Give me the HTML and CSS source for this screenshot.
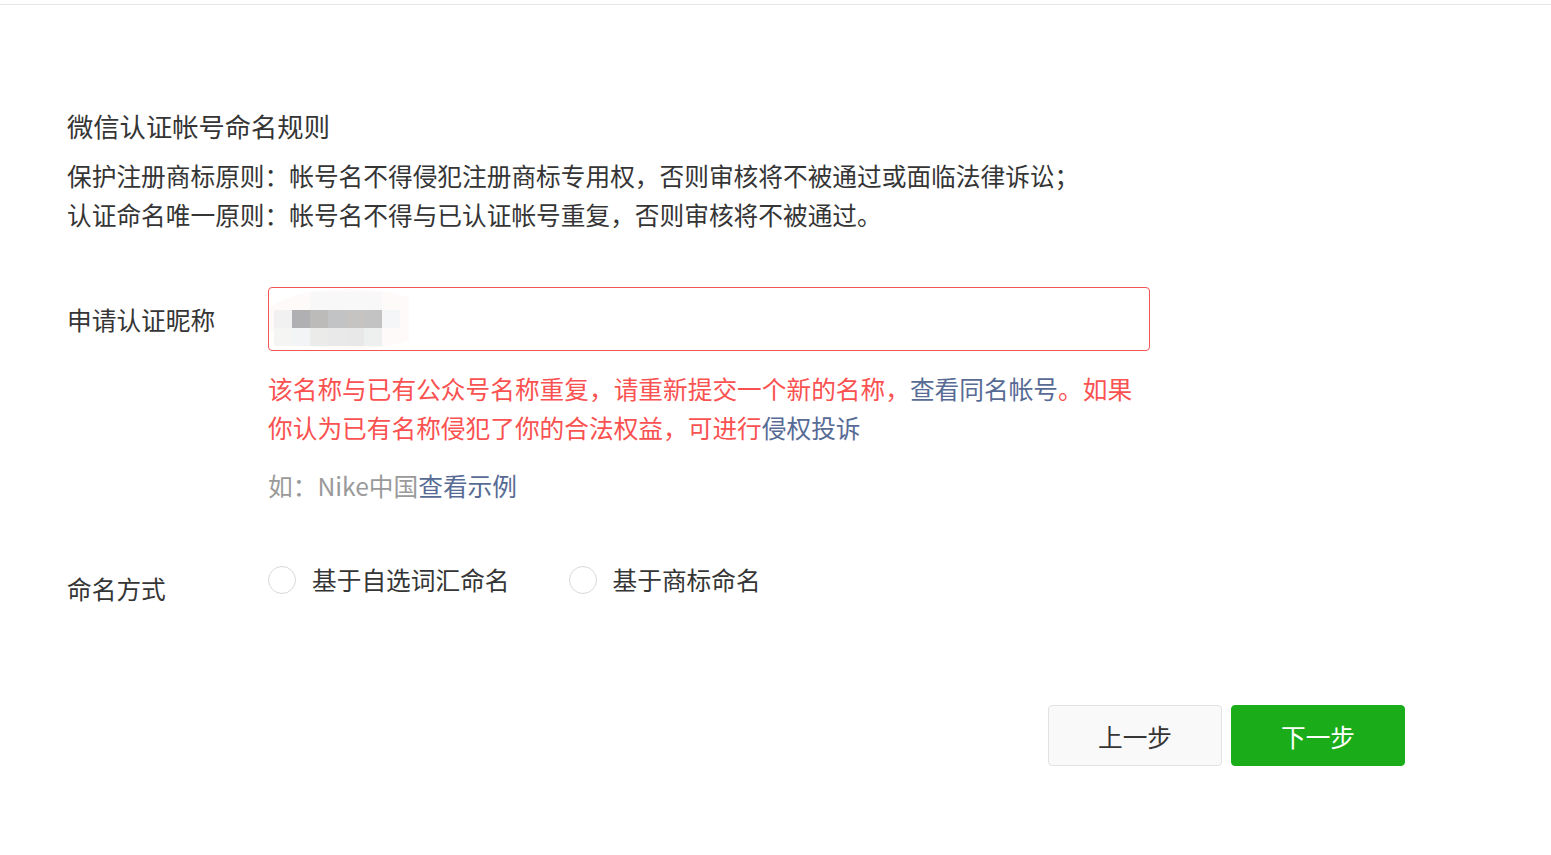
FILE: index.html
```html
<!DOCTYPE html>
<html lang="zh-CN">
<head>
    <meta charset="UTF-8">
    <title>微信认证帐号命名</title>
    <link rel="stylesheet" href="styles.css">
</head>
<body>
    <div class="topbar"></div>

    <div class="content">
        <!-- 命名规则 -->
        <h3 class="rules-title">微信认证帐号命名规则</h3>
        <p class="rule">保护注册商标原则：帐号名不得侵犯注册商标专用权，否则审核将不被通过或面临法律诉讼；</p>
        <p class="rule">认证命名唯一原则：帐号名不得与已认证帐号重复，否则审核将不被通过。</p>

        <!-- 申请认证昵称 -->
        <div class="form-row first">
            <label class="form-label tall">申请认证昵称</label>
            <div class="form-field">
                <div class="nickname-input">
                    <svg class="mosaic" width="140" height="64" viewBox="0 0 140 64">
                        <ellipse cx="80" cy="32" rx="86" ry="30" fill="#fffafa"/>
                        <rect x="41" y="5" width="72" height="18" fill="#f8f8f8"/>
                        <rect x="5" y="23" width="18" height="18" fill="#f1f1f1"/>
                        <rect x="23" y="23" width="18" height="18" fill="#b0b0b2"/>
                        <rect x="41" y="23" width="18" height="18" fill="#bdbbb9"/>
                        <rect x="59" y="23" width="18" height="18" fill="#c2c3c5"/>
                        <rect x="77" y="23" width="18" height="18" fill="#c6c3c3"/>
                        <rect x="95" y="23" width="18" height="18" fill="#c3c3c3"/>
                        <rect x="113" y="23" width="18" height="18" fill="#f5f6f8"/>
                        <rect x="5" y="41" width="18" height="18" fill="#f5f5f3"/>
                        <rect x="23" y="41" width="18" height="18" fill="#f3f4f6"/>
                        <rect x="41" y="41" width="18" height="18" fill="#ebebe9"/>
                        <rect x="59" y="41" width="18" height="18" fill="#e9e9e9"/>
                        <rect x="77" y="41" width="18" height="18" fill="#e8e8e8"/>
                        <rect x="95" y="41" width="18" height="18" fill="#eef0ef"/>
                    </svg>
                </div>
                <p class="error-tip">该名称与已有公众号名称重复，请重新提交一个新的名称，<a href="#">查看同名帐号</a>。如果你认为已有名称侵犯了你的合法权益，可进行<a href="#">侵权投诉</a></p>
                <p class="hint">如：Nike中国<a href="#">查看示例</a></p>
            </div>
        </div>

        <!-- 命名方式 -->
        <div class="form-row second">
            <label class="form-label offset">命名方式</label>
            <div class="form-field radios">
                <label class="radio"><span class="radio-circle"></span>基于自选词汇命名</label>
                <label class="radio"><span class="radio-circle"></span>基于商标命名</label>
            </div>
        </div>

        <div class="actions">
            <button class="btn btn-default">上一步</button>
            <button class="btn btn-primary">下一步</button>
        </div>
    </div>
</body>
</html>
```

FILE: styles.css
```css
body {
    margin: 0;
    background-color: #fff;
    color: #353535;
    font-family: "Noto Sans CJK SC", "Noto Sans", sans-serif;
    font-size: 24.7px;
    line-height: 39px;
}

.topbar {
    height: 4px;
    border-bottom: 1px solid #e4e6eb;
}

.content {
    padding: 0 146px 0 67px;
}

.rules-title {
    margin: 101px 0 11px;
    font-size: 26.3px;
    font-weight: normal;
    line-height: 39px;
}

.rule {
    margin: 0;
}

.form-row {
    display: flex;
    align-items: flex-start;
}

.form-row.first {
    margin-top: 53px;
}

.form-row.second {
    margin-top: 55px;
}

.form-label {
    width: 201px;
    flex-shrink: 0;
}

.form-label.tall {
    line-height: 64px;
}

.form-label.offset {
    padding-top: 9px;
}

.form-field {
    width: 882px;
}

.nickname-input {
    height: 62px;
    border: 1px solid #f25555;
    border-radius: 4px;
    overflow: hidden;
}

.mosaic {
    display: block;
    margin-top: -1px;
}

.error-tip {
    margin: 18px 0 0;
    color: #fa5151;
}

.hint {
    margin: 19px 0 0;
    color: #9a9a9a;
}

a {
    color: #576b95;
    text-decoration: none;
}

.radios {
    display: flex;
    align-items: center;
    gap: 59px;
    height: 39px;
}

.radio {
    display: flex;
    align-items: center;
    gap: 16px;
}

.radio-circle {
    width: 26px;
    height: 26px;
    border: 1px solid #d9d9d9;
    border-radius: 50%;
}

.actions {
    display: flex;
    justify-content: flex-end;
    gap: 9px;
    margin-top: 97px;
}

.btn {
    width: 174px;
    height: 61px;
    border-radius: 4px;
    font-family: inherit;
    font-size: 24.7px;
    cursor: pointer;
}

.btn-default {
    background-color: #f9f9f9;
    border: 1px solid #e2e2e2;
    color: #353535;
}

.btn-primary {
    background-color: #1aad19;
    border: 1px solid #1aad19;
    color: #fff;
}
```
